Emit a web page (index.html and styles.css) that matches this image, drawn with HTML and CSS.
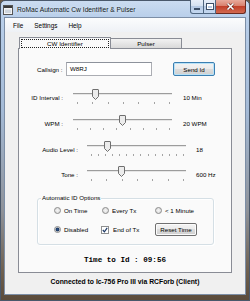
FILE: index.html
```html
<!DOCTYPE html>
<html lang="en">
<head>
  <meta charset="UTF-8" />
  <title>RoMac Automatic Cw Identifier &amp; Pulser</title>
  <link rel="stylesheet" href="styles.css">
</head>
<body>
  <div class="window">
    <div class="titlebar">
      <svg class="app-icon" width="10" height="10" viewBox="0 0 10 10">
        <rect x="0.5" y="0.5" width="9" height="9" fill="#f4f4f4" stroke="#555"/>
        <rect x="1" y="1" width="8" height="2" fill="#3a3a3a"/>
        <rect x="2" y="4.5" width="6" height="3.5" fill="#cfd6de"/>
      </svg>
      <span class="title">RoMac Automatic Cw Identifier &amp; Pulser</span>
      <div class="caption">
        <span class="cap min"><i></i></span>
        <span class="cap max"><i></i></span>
        <span class="cap close">
          <svg width="9" height="7" viewBox="0 0 9 7">
            <path d="M1.5 0.5 L7.5 6.5 M7.5 0.5 L1.5 6.5" stroke="#5a1a12" stroke-width="2.6"/>
            <path d="M1.5 0.5 L7.5 6.5 M7.5 0.5 L1.5 6.5" stroke="#fff" stroke-width="1.6"/>
          </svg>
        </span>
      </div>
    </div>

    <div class="client">
      <div class="menubar">
        <span>File</span>
        <span>Settings</span>
        <span>Help</span>
      </div>

      <div class="tabs">
        <div class="tabstrip">
          <div class="tab active"><span class="focus">CW Identifier</span></div>
          <div class="tab">Pulser</div>
        </div>

        <div class="page">
          <div class="callsign-row">
            <span class="callsign-label">Callsign :</span>
            <div class="textbox">W8RJ</div>
            <div class="button default">Send Id</div>
          </div>

          <div class="slider-row wide">
            <span class="slider-label">ID Interval :</span>
            <div class="slider">
              <div class="rail">
                <div class="track"></div>
                <svg class="thumb" style="left:19px" width="7" height="11" viewBox="0 0 7 11"><path d="M0.5 1 Q0.5 0.5 1 0.5 H6 Q6.5 0.5 6.5 1 V7.5 L3.5 10.5 L0.5 7.5 Z"/></svg>
              </div>
              <div class="ticks"><i></i><i></i><i></i><i></i><i></i><i></i><i></i></div>
            </div>
            <span class="slider-value">10 Min</span>
          </div>

          <div class="slider-row wide">
            <span class="slider-label">WPM :</span>
            <div class="slider">
              <div class="rail">
                <div class="track"></div>
                <svg class="thumb" style="left:46px" width="7" height="11" viewBox="0 0 7 11"><path d="M0.5 1 Q0.5 0.5 1 0.5 H6 Q6.5 0.5 6.5 1 V7.5 L3.5 10.5 L0.5 7.5 Z"/></svg>
              </div>
              <div class="ticks"><i></i><i></i><i></i><i></i><i></i><i></i><i></i><i></i></div>
            </div>
            <span class="slider-value">20 WPM</span>
          </div>

          <div class="slider-row narrow">
            <span class="slider-label">Audio Level :</span>
            <div class="slider">
              <div class="rail">
                <div class="track"></div>
                <svg class="thumb" style="left:17px" width="7" height="11" viewBox="0 0 7 11"><path d="M0.5 1 Q0.5 0.5 1 0.5 H6 Q6.5 0.5 6.5 1 V7.5 L3.5 10.5 L0.5 7.5 Z"/></svg>
              </div>
              <div class="ticks"><i></i><i></i><i></i><i></i><i></i><i></i><i></i><i></i><i></i><i></i><i></i><i></i><i></i><i></i></div>
            </div>
            <span class="slider-value">18</span>
          </div>

          <div class="slider-row narrow">
            <span class="slider-label">Tone :</span>
            <div class="slider">
              <div class="rail">
                <div class="track"></div>
                <svg class="thumb" style="left:31px" width="7" height="11" viewBox="0 0 7 11"><path d="M0.5 1 Q0.5 0.5 1 0.5 H6 Q6.5 0.5 6.5 1 V7.5 L3.5 10.5 L0.5 7.5 Z"/></svg>
              </div>
              <div class="ticks"><i></i><i></i><i></i><i></i><i></i><i></i><i></i></div>
            </div>
            <span class="slider-value">600 Hz</span>
          </div>

          <fieldset class="group">
            <legend>Automatic ID Options</legend>
            <div class="option-row">
              <label class="option"><span class="radio"></span>On Time</label>
              <label class="option"><span class="radio"></span>Every Tx</label>
              <label class="option"><span class="radio"></span>&lt; 1 Minute</label>
            </div>
            <div class="option-row">
              <label class="option"><span class="radio checked"></span>Disabled</label>
              <label class="option">
                <span class="checkbox">
                  <svg width="6" height="6" viewBox="0 0 6 6"><path d="M0.8 3 L2.4 4.8 L5.2 0.8" fill="none" stroke="#1e3a66" stroke-width="1.2"/></svg>
                </span>End of Tx
              </label>
              <div class="button">Reset Time</div>
            </div>
          </fieldset>

          <div class="timer">Time to Id : 09:56</div>
        </div>
      </div>

      <div class="status">Connected to Ic-756 Pro III via RCForb (Client)</div>
    </div>
  </div>
</body>
</html>
```

FILE: styles.css
```css
* {
  box-sizing: border-box;
}
body {
  margin: 0;
  width: 250px;
  height: 301px;
  overflow: hidden;
  font-family: 'Liberation Sans', Arial, sans-serif;
  font-size: 6.2px;
  color: #000;
  background: #6b5a46;
}
.window {
  height: 301px;
  display: flex;
  flex-direction: column;
  border: 1px solid #4a586b;
  border-radius: 5px 5px 0 0;
  background: linear-gradient(to bottom, #cbdcf1 0, #b9cfea 16px, #a4bad6 110px, #8e9299 210px, #6e6050 270px, #5a4a3a 301px);
}
.titlebar {
  height: 16px;
  display: flex;
  align-items: center;
  padding-left: 2px;
}
.app-icon {
  margin-right: 4px;
  margin-top: 1px;
}
.title {
  font-size: 6.7px;
  color: #101820;
  text-shadow: 0 0 3px #eaf2fb;
}
.caption {
  margin-left: auto;
  margin-right: 3px;
  align-self: flex-start;
  display: flex;
  margin-top: -1px;
}
.cap {
  height: 14px;
  display: flex;
  align-items: center;
  justify-content: center;
  border: 1px solid #4f6680;
  border-top: none;
  background: linear-gradient(to bottom, #e7eef8 0, #d3e0f0 50%, #b5c9e3 50%, #c4d8f0 100%);
}
.min {
  width: 14px;
  border-radius: 0 0 0 3px;
}
.min i {
  width: 6px;
  height: 2px;
  margin-top: 5px;
  background: #fff;
  border: 0.5px solid #3c4e66;
}
.max {
  width: 12px;
  border-left: none;
}
.max i {
  width: 6px;
  height: 5px;
  border: 1px solid #fff;
  border-top-width: 2px;
  outline: 0.5px solid #3c4e66;
}
.close {
  width: 30px;
  border-left: none;
  border-radius: 0 0 3px 0;
  border-color: #6a2a20;
  background: linear-gradient(to bottom, #e8aa9c 0, #d77c68 50%, #c2402a 50%, #d2694f 100%);
}
.client {
  flex: 1;
  margin: 0 3px 5px 3px;
  border: 1px solid #7c8ea6;
  background: #f0f0f0;
  display: flex;
  flex-direction: column;
}
.menubar {
  height: 14px;
  display: flex;
  align-items: center;
  gap: 11px;
  padding-left: 8px;
  font-size: 6.4px;
  background: linear-gradient(to bottom, #fbfcfd, #eef1f6);
}
.tabs {
  margin: 5px 0 0 13px;
  width: 214px;
}
.tabstrip {
  display: flex;
  height: 11px;
  padding-left: 1px;
}
.tab {
  width: 71px;
  height: 10px;
  margin-top: 1px;
  display: flex;
  align-items: center;
  justify-content: center;
  border: 1px solid #898c95;
  border-bottom: none;
  border-left: none;
  background: linear-gradient(to bottom, #f2f2f2, #d9d9d9);
}
.tab.active {
  width: 92px;
  height: 12px;
  margin-top: 0;
  border-left: 1px solid #898c95;
  background: #fafafa;
  position: relative;
  z-index: 1;
  align-items: flex-start;
  padding: 1px 1px 0;
}
.focus {
  width: 100%;
  height: 9px;
  display: flex;
  align-items: center;
  justify-content: center;
  border: 1px dotted #222;
}
.page {
  height: 225px;
  border: 1px solid #898c95;
  background: #fafafa;
  display: flex;
  flex-direction: column;
}
.callsign-row {
  display: flex;
  align-items: center;
  height: 14px;
  margin: 13px 0 0 18px;
}
.callsign-label {
  width: 29px;
}
.textbox {
  width: 86px;
  height: 14px;
  line-height: 12px;
  padding-left: 3px;
  background: #fff;
  border: 1px solid #abadb3;
  border-top-color: #8e939c;
}
.button {
  width: 42px;
  height: 14px;
  display: flex;
  align-items: center;
  justify-content: center;
  border: 1px solid #707070;
  border-radius: 2px;
  background: linear-gradient(to bottom, #f3f3f3 0, #ebebeb 50%, #dddddd 50%, #cfcfcf 100%);
  box-shadow: inset 0 0 0 1px #fbfbfb;
}
.button.default {
  margin-left: 21px;
  border-color: #3c7fb1;
  box-shadow: inset 0 0 0 1px #b8e2f7;
}
.slider-row {
  display: flex;
  align-items: center;
  height: 16px;
  margin-top: 10px;
}
.callsign-row + .slider-row {
  margin-top: 13px;
}
.slider-row:nth-child(5) {
  margin-top: 9px;
}
.slider-label {
  text-align: right;
  padding-top: 1px;
}
.wide .slider-label {
  width: 44px;
  margin-right: 10px;
}
.narrow .slider-label {
  width: 59px;
  margin-right: 9px;
}
.slider {
  width: 99px;
  height: 16px;
  display: flex;
  flex-direction: column;
}
.rail {
  position: relative;
  height: 11px;
}
.track {
  margin-top: 4px;
  height: 2px;
  border-top: 1px solid #9c9c9c;
  border-bottom: 1px solid #e6e6e6;
}
.thumb {
  position: absolute;
  top: 0;
}
.thumb path {
  fill: #ececec;
  stroke: #6f6f6f;
  stroke-width: 1;
}
.ticks {
  margin-top: 2px;
  display: flex;
  justify-content: space-between;
  padding: 0 2px 0 4px;
}
.ticks i {
  width: 1px;
  height: 2px;
  background: #a4a4a4;
}
.slider-value {
  padding-top: 1px;
}
.wide .slider-value {
  margin-left: 11px;
}
.narrow .slider-value {
  margin-left: 10px;
}
.group {
  width: 177px;
  margin: 12px 0 0 18px;
  padding: 2px 0 8px 0;
  border: 1px solid #d5dfe5;
  border-radius: 3px;
  box-shadow: inset 1px 1px 0 #fff, 1px 1px 0 #fff;
}
.group legend {
  margin-left: 3px;
  padding: 0 1px;
  line-height: 8px;
}
.option-row {
  display: grid;
  grid-template-columns: 48px 53px 1fr;
  align-items: center;
  height: 13px;
  padding-left: 16px;
}
.option-row + .option-row {
  margin-top: 6px;
}
.option {
  display: flex;
  align-items: center;
}
.radio {
  width: 7px;
  height: 7px;
  margin-right: 3px;
  border-radius: 50%;
  border: 1px solid #8b8b8b;
  background: radial-gradient(circle, #f4f4f4 0, #d8d8d8 100%);
}
.radio.checked {
  background: radial-gradient(circle, #2c5185 0, #1d3b66 1.5px, #dcdcdc 2.3px);
}
.checkbox {
  width: 8px;
  height: 8px;
  margin: 0 4px 0 -1px;
  display: flex;
  align-items: center;
  justify-content: center;
  border: 1px solid #8e8f8f;
  background: #fff;
}
.option-row .button {
  width: 42px;
  height: 13px;
}
.timer {
  margin-top: 10px;
  line-height: 10px;
  text-align: center;
  font-family: 'Liberation Mono', 'Courier New', monospace;
  font-size: 7.6px;
  font-weight: bold;
}
.status {
  margin-top: 4px;
  line-height: 10px;
  text-align: center;
  font-size: 6.8px;
  font-weight: bold;
}
```
